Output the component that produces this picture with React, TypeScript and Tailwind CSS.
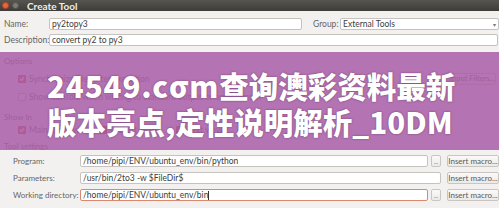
import React from "react";

const ui = { fontFamily: 'Lato, "Noto Sans", sans-serif' };

function Check({ on, label }: { on?: boolean; label: string }) {
  return (
    <div className="flex items-center gap-[3px] whitespace-nowrap">
      <span
        className={
          on
            ? "w-[8px] h-[8px] rounded-[1px] bg-[#e0503c] border border-[#b8402e] flex items-center justify-center"
            : "w-[8px] h-[8px] rounded-[1px] bg-white border border-[#b5b2ae]"
        }
      >
        {on && (
          <svg width="6" height="6" viewBox="0 0 6 6">
            <path d="M1 3l1.4 1.4L5 1.5" stroke="#fff" strokeWidth="1.2" fill="none" />
          </svg>
        )}
      </span>
      <span>{label}</span>
    </div>
  );
}

function Field({ value, focused, className }: { value: string; focused?: boolean; className: string }) {
  return (
    <div
      className={
        "h-[12px] bg-white rounded-[2px] border flex items-center px-[2px] text-[#3c3c3c] whitespace-nowrap overflow-hidden " +
        (focused ? "border-[#d98a6e] " : "border-[#c6c3bf] ") +
        className
      }
    >
      {value}
      {focused && <span className="w-px h-[9px] bg-[#333]" />}
    </div>
  );
}

function Btn({ children, className }: { children: React.ReactNode; className: string }) {
  return (
    <div
      className={
        "h-[12px] rounded-[2px] border border-[#c9c6c2] bg-gradient-to-b from-[#fbfaf9] to-[#eceae8] flex items-center justify-center text-[#5a5a5a] whitespace-nowrap overflow-hidden " +
        className
      }
    >
      {children}
    </div>
  );
}

export default function App() {
  return (
    <div
      className="relative w-[499px] h-[208px] overflow-hidden bg-[#f2f1f0] text-[8.5px] text-[#666]"
      style={ui}
    >
      {/* title bar */}
      <div className="h-[11px] bg-gradient-to-b from-[#56554f] to-[#3d3c38] flex items-center px-[2px] gap-[3px]">
        <span className="w-[7px] h-[7px] rounded-full bg-[#e8643c] border border-[#a9482a]" />
        <span className="w-[7px] h-[7px] rounded-full bg-[#7b7a75] border border-[#55544f]" />
        <span className="ml-[5px] text-[10px] font-bold text-[#eeeeec] leading-none">Create Tool</span>
      </div>

      {/* name / group */}
      <div className="flex items-center mt-[7px] h-[12px] whitespace-nowrap">
        <span className="w-[49px] pl-[4px]">Name:</span>
        <Field value="py2topy3" className="w-[253px]" />
        <span className="w-[38px] pl-[11px]">Group:</span>
        <div className="flex-1 h-[12px] bg-white border border-[#c6c3bf] rounded-[2px] flex items-center px-[2px] text-[#3c3c3c]">
          <span className="flex-1">External Tools</span>
          <span className="text-[6px] text-[#777]">▾</span>
        </div>
      </div>
      <div className="flex items-center mt-[4px] h-[12px] whitespace-nowrap">
        <span className="w-[49px] pl-[4px]">Description:</span>
        <Field value="convert py2 to py3" className="flex-1 mr-px" />
      </div>

      {/* options (under watermark band) */}
      <div className="mt-[9px] pl-[4px] text-[8px]">Options</div>
      <div className="flex items-center pl-[18px] pr-[3px] mt-[6px] h-[12px]">
        <div className="flex-1">
          <Check on label="Synchronize files after execution" />
        </div>
        <Btn className="w-[47px] text-[7.5px]">Input Filters...</Btn>
      </div>
      <div className="flex items-center pl-[18px] mt-[6px] h-[12px]">
        <Check label="Show console when writing to standard output or error stream" />
      </div>
      <div className="mt-[8px] pl-[4px] text-[8px]">Show In</div>
      <div className="flex items-center gap-[20px] pl-[18px] mt-[1px] h-[12px]">
        <Check on label="Main window" />
        <Check on label="Project view" />
        <Check on label="Text view" />
      </div>
      <div className="mt-[4px] pl-[4px] text-[8px]">Tool settings</div>

      {/* tool settings */}
      <div className="flex flex-col gap-[5px] mt-[3px] whitespace-nowrap">
        <div className="flex items-center h-[12px]">
          <span className="w-[80px] pl-[13px] text-[8px]">Program:</span>
          <Field value="/home/pipi/ENV/ubuntu_env/bin/python" className="w-[348px]" />
          <Btn className="w-[10px] ml-[3px] text-[6px]">...</Btn>
          <Btn className="w-[52px] ml-[6px] text-[8px]">Insert macro...</Btn>
        </div>
        <div className="flex items-center h-[12px]">
          <span className="w-[80px] pl-[13px] text-[8px]">Parameters:</span>
          <Field value="/usr/bin/2to3 -w $FileDir$" className="w-[361px]" />
          <Btn className="w-[52px] ml-[6px] text-[8px]">Insert macro...</Btn>
        </div>
        <div className="flex items-center h-[12px]">
          <span className="w-[80px] pl-[13px] text-[8px]">Working directory:</span>
          <Field value="/home/pipi/ENV/ubuntu_env/bin" focused className="w-[348px]" />
          <Btn className="w-[10px] ml-[3px] text-[6px]">...</Btn>
          <Btn className="w-[52px] ml-[6px] text-[8px]">Insert macro...</Btn>
        </div>
      </div>

      {/* watermark band */}
      <div className="absolute left-0 right-0 top-[52px] h-[98px] bg-[rgba(170,94,168,0.86)]" />
      <div
        className="absolute left-[47px] top-[67px] text-white text-[29.5px] leading-[36px] font-black whitespace-nowrap [text-shadow:0_0_2px_rgba(60,20,60,0.6)]"
        style={{ fontFamily: '"Noto Sans CJK SC", "Noto Sans", sans-serif' }}
      >
        <div>
          <span className="tracking-[0.9px]">24549.cσm</span>查询澳彩资料最新
        </div>
        <div>版本亮点,定性说明解析_10DM</div>
      </div>
    </div>
  );
}
